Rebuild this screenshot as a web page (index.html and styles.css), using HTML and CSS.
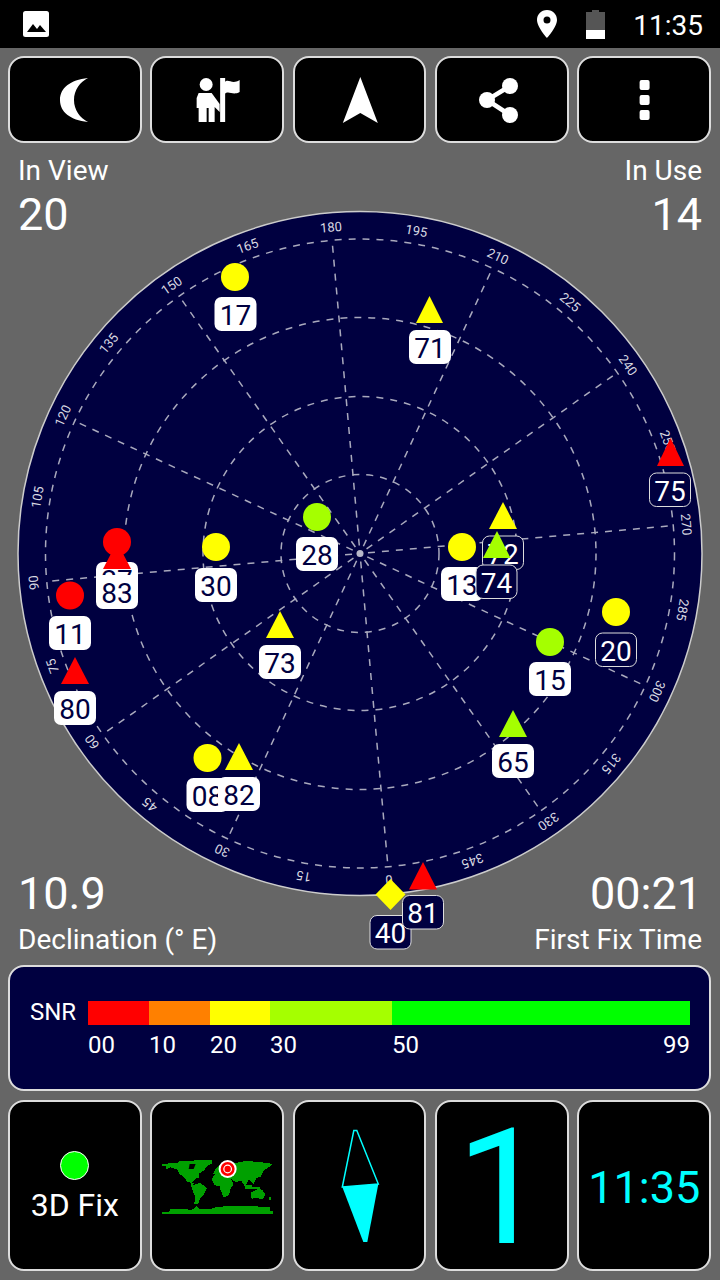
FILE: index.html
```html
<!DOCTYPE html>
<html lang="en">
<head>
<meta charset="utf-8">
<title>GPS Test</title>
<link rel="stylesheet" href="styles.css">
</head>
<body>
<div class="screen">
  <header class="status">
    <svg class="status-img" viewBox="0 0 26 26"><rect width="26" height="26" rx="2.5" class="fill-white"/><path d="M4 21 L10 13 L14 18 L17 14 L23 21Z" class="fill-black"/></svg>
    <div class="status-right">
      <svg class="status-pin" viewBox="0 0 22 28"><path fill-rule="evenodd" d="M11 0 C5 0 1 4.500 1 10 C1 17 11 28 11 28 C11 28 21 17 21 10 C21 4.500 17 0 11 0Z M11 6.500 A3.500 3.500 0 1 1 11 13.500 A3.500 3.500 0 1 1 11 6.500Z" class="fill-white"/></svg>
      <svg class="status-batt" viewBox="0 0 19 29"><path d="M6 0 H13 V2 H19 V20 H0 V2 H6Z" class="fill-dim"/><rect y="20" width="19" height="9" class="fill-white"/></svg>
      <span class="status-time">11:35</span>
    </div>
  </header>

  <nav class="tool-row">
    <button class="tile"><svg class="ico" viewBox="10 58 129.600 83"><path d="M88 78 C70 80 60 88 60 100 C60 112 70 120 88 122 C80 118 74 110 74 100 C74 90 80 82 88 78Z" class="fill-white"/></svg></button>
    <button class="tile"><svg class="ico" viewBox="152.350 58 129.600 83"><circle cx="206.500" cy="84.500" r="6.500" class="fill-white"/><path d="M199 93 H212 L220 104 V112 L215 107 V122 H209 V108 H207 V122 H199 V108 H197 V98Z" class="fill-white"/><rect x="220.500" y="78" width="5" height="44" class="fill-white"/><path d="M225 82 C229 78 232 85 240 80 V92 C233 96 229 90 225 94Z" class="fill-white"/></svg></button>
    <button class="tile"><svg class="ico" viewBox="294.700 58 129.600 83"><path d="M360 77 L377.500 123 L360 113 L342.500 123Z" class="fill-white"/></svg></button>
    <button class="tile"><svg class="ico" viewBox="437 58 129.600 83"><path d="M510 86 L487 100 L510 115" class="line-white"/><circle cx="510" cy="86" r="8" class="fill-white"/><circle cx="487" cy="100" r="8" class="fill-white"/><circle cx="510" cy="115" r="8" class="fill-white"/></svg></button>
    <button class="tile"><svg class="ico" viewBox="579.400 58 129.600 83"><rect x="640" y="80" width="10" height="10" rx="2" class="fill-white"/><rect x="640" y="95" width="10" height="10" rx="2" class="fill-white"/><rect x="640" y="110" width="10" height="10" rx="2" class="fill-white"/></svg></button>
  </nav>

  <section class="sky">
    <svg class="plot" viewBox="0 143 720 822">
      <g transform="translate(360 553.500)">
        <circle r="342" class="disc"/>
        <circle r="314.500" class="grid"/><circle r="236" class="grid"/><circle r="157" class="grid"/><circle r="79" class="grid"/>
        <circle r="3.500" class="hub"/>
        <g transform="rotate(-185.100)"><line y1="-8" y2="-314" class="grid"/><text y="-323" class="deg">0</text></g>
        <g transform="rotate(-170.100)"><text y="-323" class="deg">15</text></g>
        <g transform="rotate(-155.100)"><line y1="-8" y2="-314" class="grid"/><text y="-323" class="deg">30</text></g>
        <g transform="rotate(-140.100)"><text y="-323" class="deg">45</text></g>
        <g transform="rotate(-125.100)"><line y1="-8" y2="-314" class="grid"/><text y="-323" class="deg">60</text></g>
        <g transform="rotate(-110.100)"><text y="-323" class="deg">75</text></g>
        <g transform="rotate(-95.100)"><line y1="-8" y2="-314" class="grid"/><text y="-323" class="deg">90</text></g>
        <g transform="rotate(-80.100)"><text y="-323" class="deg">105</text></g>
        <g transform="rotate(-65.100)"><line y1="-8" y2="-314" class="grid"/><text y="-323" class="deg">120</text></g>
        <g transform="rotate(-50.100)"><text y="-323" class="deg">135</text></g>
        <g transform="rotate(-35.100)"><line y1="-8" y2="-314" class="grid"/><text y="-323" class="deg">150</text></g>
        <g transform="rotate(-20.100)"><text y="-323" class="deg">165</text></g>
        <g transform="rotate(-5.100)"><line y1="-8" y2="-314" class="grid"/><text y="-323" class="deg">180</text></g>
        <g transform="rotate(9.900)"><text y="-323" class="deg">195</text></g>
        <g transform="rotate(24.900)"><line y1="-8" y2="-314" class="grid"/><text y="-323" class="deg">210</text></g>
        <g transform="rotate(39.900)"><text y="-323" class="deg">225</text></g>
        <g transform="rotate(54.900)"><line y1="-8" y2="-314" class="grid"/><text y="-323" class="deg">240</text></g>
        <g transform="rotate(69.900)"><text y="-323" class="deg">255</text></g>
        <g transform="rotate(84.900)"><line y1="-8" y2="-314" class="grid"/><text y="-323" class="deg">270</text></g>
        <g transform="rotate(99.900)"><text y="-323" class="deg">285</text></g>
        <g transform="rotate(114.900)"><line y1="-8" y2="-314" class="grid"/><text y="-323" class="deg">300</text></g>
        <g transform="rotate(129.900)"><text y="-323" class="deg">315</text></g>
        <g transform="rotate(144.900)"><line y1="-8" y2="-314" class="grid"/><text y="-323" class="deg">330</text></g>
        <g transform="rotate(159.900)"><text y="-323" class="deg">345</text></g>
      </g>

      <circle cx="235" cy="277" r="14" class="c-yellow"/>
      <g class="lbl-use" transform="translate(235.500 297)"><rect x="-21" width="42" height="34" rx="7"/><text y="27.500">17</text></g>

      <path d="M429.500 296 L443 323 H416Z" class="c-yellow"/>
      <g class="lbl-use" transform="translate(430 330)"><rect x="-21" width="42" height="34" rx="7"/><text y="27.500">71</text></g>

      <path d="M670.500 438 L684 466 H657Z" class="c-red"/>
      <g class="lbl-free" transform="translate(670 473)"><rect x="-20.500" width="41" height="33.500" rx="7"/><text y="27.500">75</text></g>

      <circle cx="317" cy="517" r="14" class="c-lime"/>
      <g class="lbl-use" transform="translate(317 537)"><rect x="-21" width="42" height="34" rx="7"/><text y="27.500">28</text></g>

      <circle cx="216" cy="547" r="14" class="c-yellow"/>
      <g class="lbl-use" transform="translate(216 568)"><rect x="-21" width="42" height="34" rx="7"/><text y="27.500">30</text></g>

      <circle cx="117" cy="542" r="14" class="c-red"/>
      <g class="lbl-use" transform="translate(117 562)"><rect x="-21" width="42" height="34" rx="7"/><text y="27.500">27</text></g>
      <path d="M117 542 L131 569 H103Z" class="c-red"/>
      <g class="lbl-use" transform="translate(117 575)"><rect x="-21" width="42" height="34" rx="7"/><text y="27.500">83</text></g>

      <circle cx="70" cy="595.500" r="14" class="c-red"/>
      <g class="lbl-use" transform="translate(70 616)"><rect x="-21" width="42" height="34" rx="7"/><text y="27.500">11</text></g>

      <path d="M75 657 L89 684 H61Z" class="c-red"/>
      <g class="lbl-use" transform="translate(75 691)"><rect x="-21" width="42" height="34" rx="7"/><text y="27.500">80</text></g>

      <path d="M280 611 L294 638 H266Z" class="c-yellow"/>
      <g class="lbl-use" transform="translate(280 645)"><rect x="-21" width="42" height="34" rx="7"/><text y="27.500">73</text></g>

      <circle cx="207.500" cy="758" r="14" class="c-yellow"/>
      <g class="lbl-use" transform="translate(207.500 778)"><rect x="-21" width="42" height="34" rx="7"/><text y="27.500">08</text></g>
      <path d="M239 743 L253 770 H225Z" class="c-yellow"/>
      <g class="lbl-use" transform="translate(239 777)"><rect x="-21" width="42" height="34" rx="7"/><text y="27.500">82</text></g>

      <circle cx="462" cy="547" r="14" class="c-yellow"/>
      <path d="M503 502 L517 529 H489Z" class="c-yellow"/>
      <g class="lbl-free" transform="translate(503 536)"><rect x="-20.500" width="41" height="33.500" rx="7"/><text y="27.500">72</text></g>
      <g class="lbl-use" transform="translate(462 567)"><rect x="-21" width="42" height="34" rx="7"/><text y="27.500">13</text></g>
      <path d="M497 531 L510.500 558 H483Z" class="c-lime"/>
      <g class="lbl-free" transform="translate(496.500 565)"><rect x="-20.500" width="41" height="33.500" rx="7"/><text y="27.500">74</text></g>

      <circle cx="616" cy="612" r="14" class="c-yellow"/>
      <g class="lbl-free" transform="translate(616 633)"><rect x="-20.500" width="41" height="33.500" rx="7"/><text y="27.500">20</text></g>

      <circle cx="550" cy="642" r="14" class="c-lime"/>
      <g class="lbl-use" transform="translate(550 662)"><rect x="-21" width="42" height="34" rx="7"/><text y="27.500">15</text></g>

      <path d="M513 710 L527 737 H499Z" class="c-lime"/>
      <g class="lbl-use" transform="translate(513 744)"><rect x="-21" width="42" height="34" rx="7"/><text y="27.500">65</text></g>

      <path d="M390.500 879 L405.500 894.500 L390.500 910 L375.500 894.500Z" class="c-yellow"/>
      <g class="lbl-free" transform="translate(390.500 915.500)"><rect x="-20.500" width="41" height="33.500" rx="7"/><text y="27.500">40</text></g>
      <path d="M423 862 L437 889.500 H409Z" class="c-red"/>
      <g class="lbl-free" transform="translate(423 895.500)"><rect x="-20.500" width="41" height="33.500" rx="7"/><text y="27.500">81</text></g>
    </svg>

    <div class="stat-row stat-row-top">
      <div class="stat"><span class="stat-label">In View</span><span class="stat-value">20</span></div>
      <div class="stat stat-end"><span class="stat-label">In Use</span><span class="stat-value">14</span></div>
    </div>
    <div class="stat-row stat-row-bottom">
      <div class="stat"><span class="stat-value">10.9</span><span class="stat-label">Declination (° E)</span></div>
      <div class="stat stat-end"><span class="stat-value">00:21</span><span class="stat-label">First Fix Time</span></div>
    </div>
  </section>

  <section class="snr">
    <span class="snr-title">SNR</span>
    <div class="snr-scale">
      <div class="snr-bar">
        <i class="seg seg-red"></i><i class="seg seg-orange"></i><i class="seg seg-yellow"></i><i class="seg seg-lime"></i><i class="seg seg-green"></i>
      </div>
      <div class="snr-ticks">
        <span class="seg-red-w">00</span><span class="seg-orange-w">10</span><span class="seg-yellow-w">20</span><span class="seg-lime-w">30</span><span class="seg-green-w">50<b>99</b></span>
      </div>
    </div>
  </section>

  <footer class="info-row">
    <div class="tile tile-fix"><i class="fix-dot"></i><span class="fix-text">3D Fix</span></div>
    <div class="tile">
      <svg class="ico" viewBox="152.350 1102 129.600 167">
        <g class="map" transform="translate(150 1110) scale(0.3333)">
          <path d="M37 163 H52 L58 158 H85 L90 153 H130 L138 150 H186 L188 160 L172 168 L164 180 L152 188 L146 192 L150 202 L138 206 L130 214 L126 220 L112 214 L102 200 L90 192 L82 178 L62 172 L50 178 L48 168 H37Z"/>
          <path d="M122 214 L132 220 L130 226 L152 218 L172 235 L165 250 L152 264 L145 282 L134 282 L136 258 L128 240Z"/>
          <path d="M186 207 L196 192 L225 194 L242 204 L252 222 L242 238 L238 256 L222 262 L212 238 L210 228 L194 226Z"/>
          <path d="M190 192 L198 176 L212 162 L250 160 L290 153 L330 156 L370 162 L354 174 L340 184 L334 200 L320 204 L312 222 L298 208 L286 230 L274 212 L258 216 L240 204 L212 196Z"/>
          <path d="M304 248 L326 236 L338 240 L347 254 L340 268 L322 264 L306 266Z"/>
          <path d="M286 226 H306 V236 H286Z M306 230 H332 V238 H306Z M358 262 H365 V270 H358Z"/>
          <path d="M37 311 V306 H58 L62 298 H100 L128 299 L140 288 L150 296 L180 298 L200 291 L240 288 L300 288 L362 292 V302 L370 305 V311Z"/>
        </g>
        <path d="M190 1164 H196 L194 1169 H189Z" class="fill-black"/>
        <circle cx="228" cy="1169" r="9" class="fill-white"/>
        <circle cx="228" cy="1169" r="7" class="mark-red"/>
        <circle cx="228" cy="1169" r="3.800" class="mark-ring"/>
      </svg>
    </div>
    <div class="tile">
      <svg class="ico" viewBox="294.700 1102 129.600 167">
        <path d="M353.500 1130.500 H356.500 L378 1184 L342 1187Z" class="needle-n"/>
        <path d="M342 1187 L378 1184 L367 1242 H363Z" class="needle-s"/>
      </svg>
    </div>
    <div class="tile tile-sats"><span class="sats">1</span></div>
    <div class="tile tile-clock"><span class="clock">11:35</span></div>
  </footer>
</div>
</body>
</html>
```

FILE: styles.css
```css
* { box-sizing: border-box; }
html, body { margin: 0; padding: 0; }
body { background: #666; font-family: Roboto, "Liberation Sans", sans-serif; color: #fff; }
.screen { width: 720px; height: 1280px; display: flex; flex-direction: column; overflow: hidden; }

.fill-white { fill: #fff; }
.fill-black { fill: #000; }
.fill-dim { fill: #555; }
.line-white { fill: none; stroke: #fff; stroke-width: 4.500; }

.status { height: 48px; background: #000; display: flex; align-items: center; justify-content: space-between; padding: 0 17px 0 23px; }
.status-img { width: 26px; height: 26px; }
.status-right { display: flex; align-items: center; }
.status-pin { width: 22px; height: 28px; }
.status-batt { width: 19px; height: 29px; margin-left: 28px; }
.status-time { font-size: 28px; margin-left: 28px; line-height: 48px; padding-top: 3px; }

.tool-row { display: grid; grid-template-columns: repeat(5, 1fr); gap: 8.750px; padding: 8px 9px 0 8px; height: 95px; }
.tile { background: #000; border: 2px solid #ddd; border-radius: 16px; padding: 0; display: flex; align-items: center; justify-content: center; min-width: 0; color: #fff; font-family: inherit; }
.ico { width: 100%; height: 100%; display: block; }

.sky { position: relative; flex: 0 0 822px; display: flex; flex-direction: column; justify-content: space-between; padding: 11px 18px 8px; }
.plot { position: absolute; left: 0; top: 0; width: 720px; height: 822px; overflow: visible; }
.disc { fill: #000040; stroke: #ccc; stroke-width: 1.500; }
.grid { fill: none; stroke: #a9a9bd; stroke-width: 1.500; stroke-dasharray: 7 7; }
.hub { fill: #b8b8c8; }
.deg { fill: #d8d8e0; font-size: 13px; text-anchor: middle; }
.c-yellow { fill: #ff0; }
.c-red { fill: #f00; }
.c-lime { fill: #a5ff00; }
.lbl-use rect { fill: #fff; }
.lbl-use text { fill: #000040; font-size: 28px; text-anchor: middle; }
.lbl-free rect { fill: #000040; stroke: #ddd; stroke-width: 1; }
.lbl-free text { fill: #fff; font-size: 28px; text-anchor: middle; }

.stat-row { position: relative; display: flex; justify-content: space-between; pointer-events: none; }
.stat { display: flex; flex-direction: column; }
.stat-end { align-items: flex-end; }
.stat-label { font-size: 28px; line-height: 34px; }
.stat-value { font-size: 45px; line-height: 54px; }
.stat-row-bottom .stat-value { margin-bottom: 2px; }

.snr { margin: 0 9px 0 8px; height: 126px; background: #000040; border: 2px solid #ddd; border-radius: 16px; display: flex; padding: 0 19px 0 20px; }
.snr-title { font-size: 24px; line-height: 28px; margin-top: 31px; width: 58px; }
.snr-scale { flex: 1; padding-top: 34px; }
.snr-bar { display: flex; height: 24px; }
.seg { display: block; height: 100%; }
.seg-red { flex: 0 0 61px; background: #f00; }
.seg-orange { flex: 0 0 61px; background: #ff8000; }
.seg-yellow { flex: 0 0 60px; background: #ff0; }
.seg-lime { flex: 0 0 122px; background: #a5ff00; }
.seg-green { flex: 1; background: #0f0; }
.snr-ticks { display: flex; font-size: 24px; line-height: 28px; margin-top: 6px; }
.seg-red-w, .seg-orange-w { flex: 0 0 61px; }
.seg-yellow-w { flex: 0 0 60px; }
.seg-lime-w { flex: 0 0 122px; }
.seg-green-w { flex: 1; display: flex; justify-content: space-between; }
.seg-green-w b { font-weight: 400; }

.info-row { display: grid; grid-template-columns: repeat(5, 1fr); gap: 8.750px; padding: 9px 9px 0 8px; height: 180px; }
.tile-fix { flex-direction: column; padding-top: 8px; }
.fix-dot { display: block; width: 29px; height: 29px; border-radius: 50%; background: #0f0; border: 1.500px solid #fff; margin-top: -5px; }
.fix-text { font-size: 32px; line-height: 36px; margin-top: 7px; }
.map { fill: #00a000; shape-rendering: crispEdges; }
.mark-red { fill: #f00; }
.mark-ring { fill: none; stroke: #fff; stroke-width: 1.200; }
.needle-n { fill: none; stroke: #0ff; stroke-width: 1.500; }
.needle-s { fill: #0ff; }
.tile-sats { padding-top: 5px; }
.sats { color: #0ff; font-size: 162px; line-height: 160px; }
.tile-clock { padding-top: 5px; }
.clock { color: #0ff; font-size: 45px; line-height: 50px; }
```
